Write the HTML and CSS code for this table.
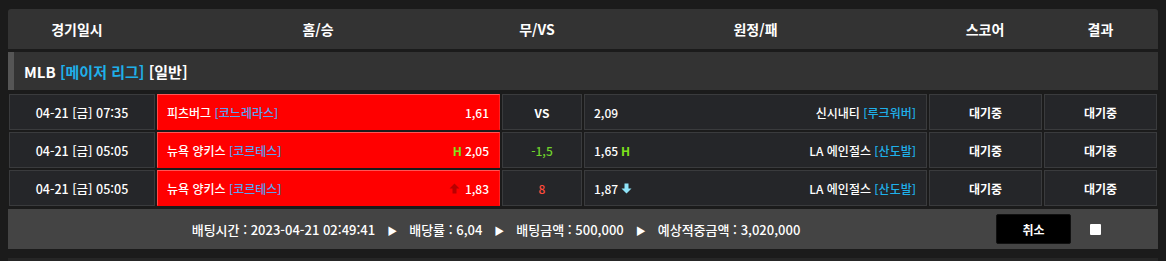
FILE: index.html
```html
<!DOCTYPE html>
<html lang="ko">
<head>
<meta charset="utf-8">
<link rel="stylesheet" href="styles.css">
</head>
<body>
<div class="wrap">
  <div class="thead">
    <div class="th th-date">경기일시</div>
    <div class="th th-home">홈/승</div>
    <div class="th th-vs">무/VS</div>
    <div class="th">원정/패</div>
    <div class="th">스코어</div>
    <div class="th">결과</div>
  </div>
  <div class="league">MLB <span class="cyan">[메이저 리그]</span> [일반]</div>
  <div class="rows">
    <div class="row">
      <div class="cell c-date">04-21 [금] 07:35</div>
      <div class="cell c-home"><span>피츠버그 <span class="pitch">[코느레라스]</span></span><span class="odd">1,61</span></div>
      <div class="cell c-vs">VS</div>
      <div class="cell c-away"><span class="odd">2,09</span><span>신시내티 <span class="cyan">[루크워버]</span></span></div>
      <div class="cell c-mid">대기중</div>
      <div class="cell c-mid">대기중</div>
    </div>
    <div class="row">
      <div class="cell c-date">04-21 [금] 05:05</div>
      <div class="cell c-home"><span>뉴욕 양키스 <span class="pitch">[코르테스]</span></span><span class="odd"><span class="h">H</span>2,05</span></div>
      <div class="cell c-vs green">-1,5</div>
      <div class="cell c-away"><span class="odd">1,65<span class="h hr">H</span></span><span>LA 에인절스 <span class="cyan">[산도발]</span></span></div>
      <div class="cell c-mid">대기중</div>
      <div class="cell c-mid">대기중</div>
    </div>
    <div class="row">
      <div class="cell c-date">04-21 [금] 05:05</div>
      <div class="cell c-home"><span>뉴욕 양키스 <span class="pitch">[코르테스]</span></span><span class="odd"><svg class="arr" width="11" height="11" viewBox="0 0 11 11"><path d="M5.5 0.5 L10.5 5.5 L7.5 5.5 L7.5 10.5 L3.5 10.5 L3.5 5.5 L0.5 5.5 Z" fill="#b80000"/></svg>1,83</span></div>
      <div class="cell c-vs redtxt">8</div>
      <div class="cell c-away"><span class="odd">1,87<svg class="arr arr-r" width="11" height="11" viewBox="0 0 11 11"><path d="M5.5 10.5 L10.5 5.5 L7.5 5.5 L7.5 0.5 L3.5 0.5 L3.5 5.5 L0.5 5.5 Z" fill="#8fe3f8"/></svg></span><span>LA 에인절스 <span class="cyan">[산도발]</span></span></div>
      <div class="cell c-mid">대기중</div>
      <div class="cell c-mid">대기중</div>
    </div>
  </div>
  <div class="foot">
    <div class="info">배팅시간 : 2023-04-21 02:49:41<span class="tri">▶</span>배당률 : 6,04<span class="tri">▶</span>배팅금액 : 500,000<span class="tri">▶</span>예상적중금액 : 3,020,000</div>
    <button class="btn">취소</button>
    <span class="chk"></span>
  </div>
  <div class="next"></div>
</div>
</body>
</html>
```

FILE: styles.css
```css
html, body {
  margin: 0;
  padding: 0;
  background: #1b1b1b;
  height: 261px;
  overflow: hidden;
}
body {
  font-family: "Noto Sans CJK KR", "Noto Sans", sans-serif;
  color: #fff;
  font-size: 12px;
}
.wrap {
  padding: 9px 8px 0 8px;
}
.thead {
  display: grid;
  grid-template-columns: 138px 344px 94px 343px 116px 115px;
  height: 40px;
  background: #333;
  border-radius: 3px 3px 0 0;
  align-items: center;
}
.th {
  text-align: center;
  font-weight: 700;
  font-size: 14px;
}
.league {
  margin-top: 3px;
  height: 38px;
  background: #333;
  border-left: 6px solid #555;
  padding-left: 10px;
  display: flex;
  align-items: center;
  font-weight: 700;
  font-size: 15px;
  white-space: pre;
}
.cyan { color: #1fb0ea; }
.pitch { color: #5aa0f2; }
.rows {
  margin-top: 4px;
  display: flex;
  flex-direction: column;
  gap: 2px;
}
.row {
  display: grid;
  grid-template-columns: 146px 343px 80px 343px 113px 113px;
  gap: 2px;
  padding-left: 1px;
  height: 36px;
}
.cell {
  background: #252629;
  border: 1px solid #3a3b3d;
  display: flex;
  align-items: center;
  font-weight: 500;
  white-space: pre;
}
.c-date { justify-content: center; font-size: 12.5px; }
.c-home {
  background: #ff0000;
  border-color: #ff5555 #ff2222 #ff0000 #ff4a4a;
  justify-content: space-between;
  padding: 0 10px 0 9px;
}
.c-vs { justify-content: center; font-weight: 700; }
.c-away {
  justify-content: space-between;
  padding: 0 10px 0 9px;
}
.c-mid { justify-content: center; font-weight: 700; }
.odd { display: flex; align-items: center; }
.h {
  color: #7fe41c;
  font-weight: 700;
  margin-right: 3px;
}
.hr { margin: 0 0 0 3px; }
.arr { margin-right: 5px; }
.arr-r { margin: 0 0 0 3px; }
.green { color: #6fd12c; font-weight: 500; }
.redtxt { color: #ff4b3b; font-weight: 500; }
.foot {
  margin-top: 3px;
  height: 40px;
  background: #444;
  display: flex;
  align-items: center;
  padding-right: 57px;
}
.info {
  flex: 1;
  text-align: center;
  white-space: pre;
  font-weight: 500;
  font-size: 13px;
}
.tri {
  font-size: 10px;
  margin: 0 12px;
}
.btn {
  margin-left: 12px;
  width: 75px;
  height: 30px;
  background: #000;
  border: 1px solid #111;
  border-radius: 2px;
  color: #fff;
  font-family: inherit;
  font-weight: 700;
  font-size: 12px;
  padding: 0;
}
.chk {
  margin-left: 19px;
  width: 11px;
  height: 11px;
  background: #fff;
  border-radius: 1px;
}
.next {
  margin-top: 9px;
  height: 10px;
  background: #262626;
}
```
